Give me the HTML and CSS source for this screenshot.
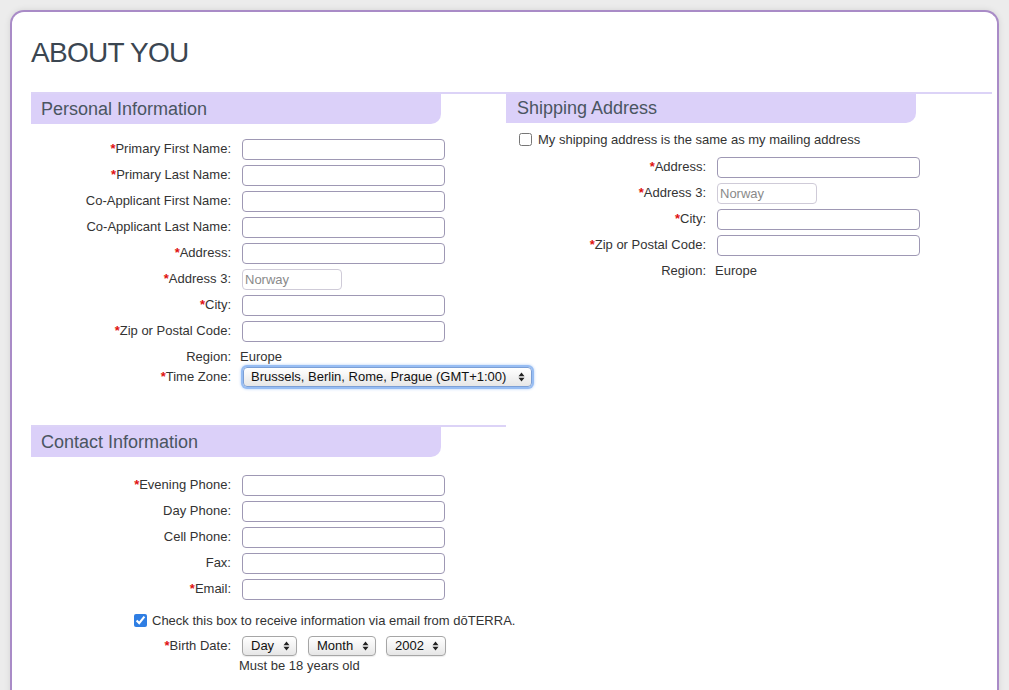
FILE: index.html
```html
<!DOCTYPE html>
<html>
<head>
<meta charset="utf-8">
<link rel="stylesheet" href="styles.css">
</head>
<body>
<div class="card">
  <h1 class="title">ABOUT YOU</h1>
  <div class="cols">
    <div class="col-left">
      <section class="section">
        <div class="sec-head"><div class="bar">Personal Information</div></div>
        <div class="rows">
          <div class="row"><label class="lbl"><span class="req">*</span>Primary First Name:</label><input class="inp" type="text"></div>
          <div class="row"><label class="lbl"><span class="req">*</span>Primary Last Name:</label><input class="inp" type="text"></div>
          <div class="row"><label class="lbl">Co-Applicant First Name:</label><input class="inp" type="text"></div>
          <div class="row"><label class="lbl">Co-Applicant Last Name:</label><input class="inp" type="text"></div>
          <div class="row"><label class="lbl"><span class="req">*</span>Address:</label><input class="inp" type="text"></div>
          <div class="row"><label class="lbl"><span class="req">*</span>Address 3:</label><input class="inp inp-dis" type="text" value="Norway" disabled></div>
          <div class="row"><label class="lbl"><span class="req">*</span>City:</label><input class="inp" type="text"></div>
          <div class="row"><label class="lbl"><span class="req">*</span>Zip or Postal Code:</label><input class="inp" type="text"></div>
          <div class="row row-region"><label class="lbl">Region:</label><span class="val">Europe</span></div>
          <div class="row row-tz"><label class="lbl"><span class="req">*</span>Time Zone:</label>
            <div class="sel sel-tz"><span>Brussels, Berlin, Rome, Prague (GMT+1:00)</span>
              <svg class="arr" width="7" height="10" viewBox="0 0 7 10"><path d="M0.5 4.2 L3.5 0.6 L6.5 4.2 Z M0.5 5.8 L3.5 9.4 L6.5 5.8 Z" fill="#222"/></svg>
            </div>
          </div>
        </div>
      </section>
      <section class="section section-contact">
        <div class="sec-head"><div class="bar">Contact Information</div></div>
        <div class="rows rows-contact">
          <div class="row"><label class="lbl"><span class="req">*</span>Evening Phone:</label><input class="inp" type="text"></div>
          <div class="row"><label class="lbl">Day Phone:</label><input class="inp" type="text"></div>
          <div class="row"><label class="lbl">Cell Phone:</label><input class="inp" type="text"></div>
          <div class="row"><label class="lbl">Fax:</label><input class="inp" type="text"></div>
          <div class="row"><label class="lbl"><span class="req">*</span>Email:</label><input class="inp" type="text"></div>
          <div class="check-row check-contact"><input class="chk" type="checkbox" checked><span>Check this box to receive information via email from dōTERRA.</span></div>
          <div class="row row-birth"><label class="lbl"><span class="req">*</span>Birth Date:</label>
            <div class="birth">
              <div class="sel sel-day"><span>Day</span><svg class="arr" width="7" height="10" viewBox="0 0 7 10"><path d="M0.5 4.2 L3.5 0.6 L6.5 4.2 Z M0.5 5.8 L3.5 9.4 L6.5 5.8 Z" fill="#222"/></svg></div>
              <div class="sel sel-month"><span>Month</span><svg class="arr" width="7" height="10" viewBox="0 0 7 10"><path d="M0.5 4.2 L3.5 0.6 L6.5 4.2 Z M0.5 5.8 L3.5 9.4 L6.5 5.8 Z" fill="#222"/></svg></div>
              <div class="sel sel-year"><span>2002</span><svg class="arr" width="7" height="10" viewBox="0 0 7 10"><path d="M0.5 4.2 L3.5 0.6 L6.5 4.2 Z M0.5 5.8 L3.5 9.4 L6.5 5.8 Z" fill="#222"/></svg></div>
            </div>
          </div>
          <div class="note">Must be 18 years old</div>
        </div>
      </section>
    </div>
    <div class="col-right">
      <section class="section">
        <div class="sec-head"><div class="bar bar-ship">Shipping Address</div></div>
        <div class="check-row check-ship"><input class="chk" type="checkbox"><span>My shipping address is the same as my mailing address</span></div>
        <div class="rows rows-ship">
          <div class="row"><label class="lbl"><span class="req">*</span>Address:</label><input class="inp" type="text"></div>
          <div class="row"><label class="lbl"><span class="req">*</span>Address 3:</label><input class="inp inp-dis" type="text" value="Norway" disabled></div>
          <div class="row"><label class="lbl"><span class="req">*</span>City:</label><input class="inp" type="text"></div>
          <div class="row"><label class="lbl"><span class="req">*</span>Zip or Postal Code:</label><input class="inp" type="text"></div>
          <div class="row row-region row-region-ship"><label class="lbl">Region:</label><span class="val">Europe</span></div>
        </div>
      </section>
    </div>
  </div>
</div>
</body>
</html>
```

FILE: styles.css
```css
html, body {
  margin: 0;
  padding: 0;
}
body {
  background: #ececec;
  font-family: "Liberation Sans", Arial, sans-serif;
  font-size: 13px;
  color: #333;
  overflow: hidden;
}
.card {
  margin: 10px 10px 0 10px;
  height: 720px;
  background: #fff;
  border: 2px solid #a98bc7;
  border-bottom: none;
  border-radius: 14px 14px 0 0;
  box-shadow: 0 0 6px rgba(0, 0, 0, 0.10);
  padding: 25px 0 0 19px;
  box-sizing: border-box;
}
.title {
  margin: 0 0 23px 0;
  font-size: 28px;
  line-height: 32px;
  height: 32px;
  font-weight: normal;
  letter-spacing: -0.7px;
  color: #3b4651;
}
.cols {
  display: flex;
}
.col-left {
  width: 475px;
  flex: none;
}
.col-right {
  width: 486px;
  flex: none;
}
.sec-head {
  border-top: 2px solid #dcd3f7;
}
.bar {
  width: 410px;
  height: 30px;
  box-sizing: border-box;
  background: #dbd0f9;
  border-bottom-right-radius: 10px;
  padding: 0 0 0 10px;
  line-height: 31px;
  font-size: 18px;
  color: #4a5561;
}
.bar-ship {
  padding-left: 11px;
  height: 29px;
  line-height: 29px;
}
.rows {
  padding-top: 12px;
}
.rows-contact {
  padding-top: 15px;
}
.row {
  display: flex;
  align-items: center;
  height: 26px;
  white-space: nowrap;
}
.lbl {
  width: 200px;
  flex: none;
  margin-right: 11px;
  text-align: right;
  line-height: 15px;
  margin-bottom: 2px;
  color: #333;
  white-space: nowrap;
}
.req {
  color: #e01010;
  font-weight: bold;
}
.inp {
  width: 203px;
  height: 21px;
  flex: none;
  box-sizing: border-box;
  border: 1px solid #9e98b4;
  border-radius: 4px;
  margin: 0;
  padding: 0 3px;
  font-family: "Liberation Sans", Arial, sans-serif;
  font-size: 13px;
  background: #fff;
  outline: none;
}
.inp-dis {
  width: 100px;
  border-color: #cfcbd8;
  color: #8a8a8a;
  padding-left: 2px;
  background: #fff;
}
.val {
  margin-left: -2px;
  margin-bottom: 2px;
  color: #333;
}
.row-region {
  height: 22px;
}
.row-region .lbl,
.row-region .val {
  margin-bottom: -2px;
}
.row-tz {
  height: 22px;
}
.sel {
  display: flex;
  align-items: center;
  justify-content: space-between;
  flex: none;
  box-sizing: border-box;
  height: 20px;
  border: 1px solid #a6a6a6;
  border-radius: 4px;
  background: linear-gradient(#ffffff, #f3f3f3 50%, #e6e6e6);
  padding: 0 6px 0 8px;
  font-size: 13px;
  color: #111;
  white-space: nowrap;
  box-shadow: 0 1px 1px rgba(0, 0, 0, 0.08);
}
.sel span {
  margin-bottom: 1px;
}
.arr {
  display: block;
  flex: none;
}
.sel-tz {
  width: 289px;
  margin-left: 1px;
  height: 20px;
  border-color: #7b9fd6;
  box-shadow: 0 0 0 2px #97bdf3, 0 0 3px 2px #aecbf5;
  padding-left: 7px;
  padding-right: 6px;
}
.section-contact {
  margin-top: 37px;
}
.check-row {
  display: flex;
  align-items: center;
  height: 20px;
  color: #333;
  white-space: nowrap;
}
.chk {
  width: 13px;
  height: 13px;
  flex: none;
  margin: 0 6px 0 0;
  accent-color: #2f7ee3;
}
.check-contact {
  margin-top: 8px;
  padding-left: 103px;
}
.check-contact .chk {
  margin-right: 5px;
}
.check-ship {
  margin-top: 6px;
  padding-left: 13px;
}
.rows-ship {
  padding-top: 5px;
}
.row-region-ship {
  height: 23px;
}
.row-birth {
  margin-top: 5px;
  height: 22px;
}
.birth {
  display: flex;
  align-items: center;
}
.sel-day {
  width: 55px;
}
.sel-month {
  width: 68px;
  margin-left: 11px;
}
.sel-year {
  width: 60px;
  margin-left: 10px;
}
.note {
  padding-left: 208px;
  line-height: 18px;
  color: #333;
}
```
